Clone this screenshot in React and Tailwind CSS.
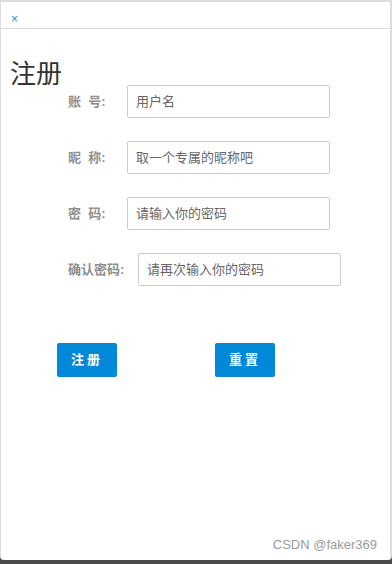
import React from 'react';

const font = { fontFamily: '"Liberation Sans", "Noto Sans CJK SC", sans-serif' };

function Row({ label, placeholder, labelW }) {
  return (
    <div className="flex items-center h-[33px]">
      <span className={`${labelW} shrink-0 text-[13px] font-bold text-[#8e8e8e] whitespace-pre`}>{label}</span>
      <input
        className="w-[203px] h-[33px] border border-[#cccccc] rounded-[2px] px-[8px] text-[13px] text-[#555] placeholder:text-[#666] outline-none bg-white"
        placeholder={placeholder}
        style={font}
      />
    </div>
  );
}

export default function App() {
  return (
    <div className="w-[392px] h-[564px] bg-[#4a4a4a] relative overflow-hidden" style={font}>
      <div className="h-[560px] bg-white border-l border-r-2 border-t-2 border-[#dcdcdc] rounded-b-[4px] flex flex-col">
        {/* header */}
        <div className="h-[27px] border-b border-[#d9d9d9] flex items-end pl-[10px] pb-[1px]">
          <span className="text-[#1a8ae6] text-[12px] leading-[16px]">×</span>
        </div>

        <h1 className="ml-[9px] mt-[30px] text-[26px] leading-[30px] text-[#333] font-normal">注册</h1>

        <div className="ml-[67px] -mt-[4px] flex flex-col gap-[23px]">
          <Row label="账  号:" placeholder="用户名" labelW="w-[59px]" />
          <Row label="昵  称:" placeholder="取一个专属的昵称吧" labelW="w-[59px]" />
          <Row label="密  码:" placeholder="请输入你的密码" labelW="w-[59px]" />
          <Row label="确认密码:" placeholder="请再次输入你的密码" labelW="w-[70px]" />
        </div>

        <div className="flex ml-[56px] mt-[57px] gap-[98px]">
          <button className="w-[60px] h-[34px] bg-[#0288d9] rounded-[2px] text-white text-[13px] font-bold tracking-[3px]">注册</button>
          <button className="w-[60px] h-[34px] bg-[#0288d9] rounded-[2px] text-white text-[13px] font-bold tracking-[3px]">重置</button>
        </div>

        <div className="mt-auto mb-[6px] mr-[13px] self-end text-[13px] text-[#9a9a9a]">CSDN @faker369</div>
      </div>
    </div>
  );
}
